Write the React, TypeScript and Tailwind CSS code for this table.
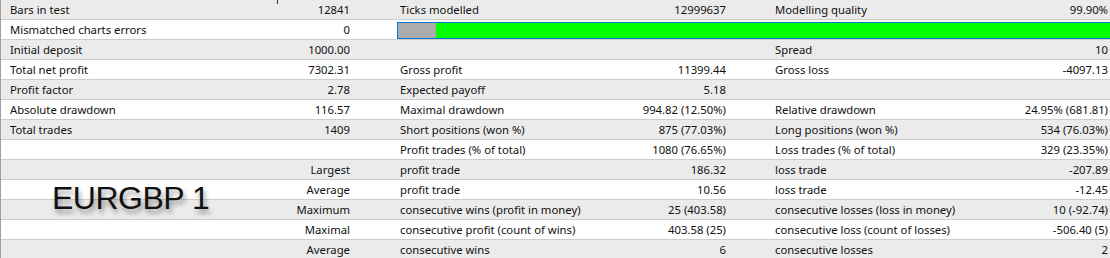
import React from 'react';

type Row = {
  a?: [string, string];
  b?: [string, string];
  c?: [string, string];
  right?: boolean;
  bar?: boolean;
};

const rows: Row[] = [
  { a: ['Bars in test', '12841'], b: ['Ticks modelled', '12999637'], c: ['Modelling quality', '99.90%'] },
  { a: ['Mismatched charts errors', '0'], bar: true },
  { a: ['Initial deposit', '1000.00'], c: ['Spread', '10'] },
  { a: ['Total net profit', '7302.31'], b: ['Gross profit', '11399.44'], c: ['Gross loss', '-4097.13'] },
  { a: ['Profit factor', '2.78'], b: ['Expected payoff', '5.18'] },
  { a: ['Absolute drawdown', '116.57'], b: ['Maximal drawdown', '994.82 (12.50%)'], c: ['Relative drawdown', '24.95% (681.81)'] },
  { a: ['Total trades', '1409'], b: ['Short positions (won %)', '875 (77.03%)'], c: ['Long positions (won %)', '534 (76.03%)'] },
  { b: ['Profit trades (% of total)', '1080 (76.65%)'], c: ['Loss trades (% of total)', '329 (23.35%)'] },
  { right: true, a: ['Largest', ''], b: ['profit trade', '186.32'], c: ['loss trade', '-207.89'] },
  { right: true, a: ['Average', ''], b: ['profit trade', '10.56'], c: ['loss trade', '-12.45'] },
  { right: true, a: ['Maximum', ''], b: ['consecutive wins (profit in money)', '25 (403.58)'], c: ['consecutive losses (loss in money)', '10 (-92.74)'] },
  { right: true, a: ['Maximal', ''], b: ['consecutive profit (count of wins)', '403.58 (25)'], c: ['consecutive loss (count of losses)', '-506.40 (5)'] },
  { right: true, a: ['Average', ''], b: ['consecutive wins', '6'], c: ['consecutive losses', '2'] },
];

function Cell({ pair, className }: { pair?: [string, string]; className: string }) {
  return (
    <div className={`flex shrink-0 items-center justify-between ${className}`}>
      <span>{pair?.[0]}</span>
      <span>{pair?.[1]}</span>
    </div>
  );
}

export default function App() {
  return (
    <div
      className="relative h-[258px] w-[1110px] overflow-hidden border-l border-[#a0a0a0] bg-white text-[11.3px] text-[#101010]"
      style={{ fontFamily: '"Noto Sans", "Open Sans", sans-serif' }}
    >
      {rows.map((r, i) => (
        <div
          key={i}
          className={`flex h-[20px] border-b border-[#cdcdcd] pt-px ${i % 2 === 0 ? 'bg-[#ebebeb]' : 'bg-white'}`}
        >
          {r.right ? (
            <div className="flex w-[369px] shrink-0 items-center justify-end pr-[20px]">{r.a?.[0]}</div>
          ) : (
            <Cell pair={r.a} className="w-[369px] pl-[9px] pr-[20px]" />
          )}
          {r.bar ? (
            <div className="flex shrink-0 items-center pl-[27px]">
              <div className="flex h-[17px] w-[730px] border border-[#0078d7]">
                <div className="w-[38px] bg-[#acacac]" />
                <div className="flex-1 bg-[#00ff00]" />
              </div>
            </div>
          ) : (
            <>
              <Cell pair={r.b} className="w-[375px] pl-[30px] pr-[19px]" />
              <Cell pair={r.c} className="w-[365px] pl-[30px] pr-[2px]" />
            </>
          )}
        </div>
      ))}

      {/* small header tick */}
      <div className="absolute left-[276px] top-0 h-[4px] w-px bg-[#333]" />

      <div
        className="absolute left-[51px] top-[182px] text-[32px] leading-none tracking-[-0.5px] text-[#111] [text-shadow:2px_4px_5px_rgba(0,0,0,0.4)]"
        style={{ fontFamily: '"Liberation Sans", Arial, sans-serif' }}
      >
        EURGBP 1
      </div>
    </div>
  );
}
